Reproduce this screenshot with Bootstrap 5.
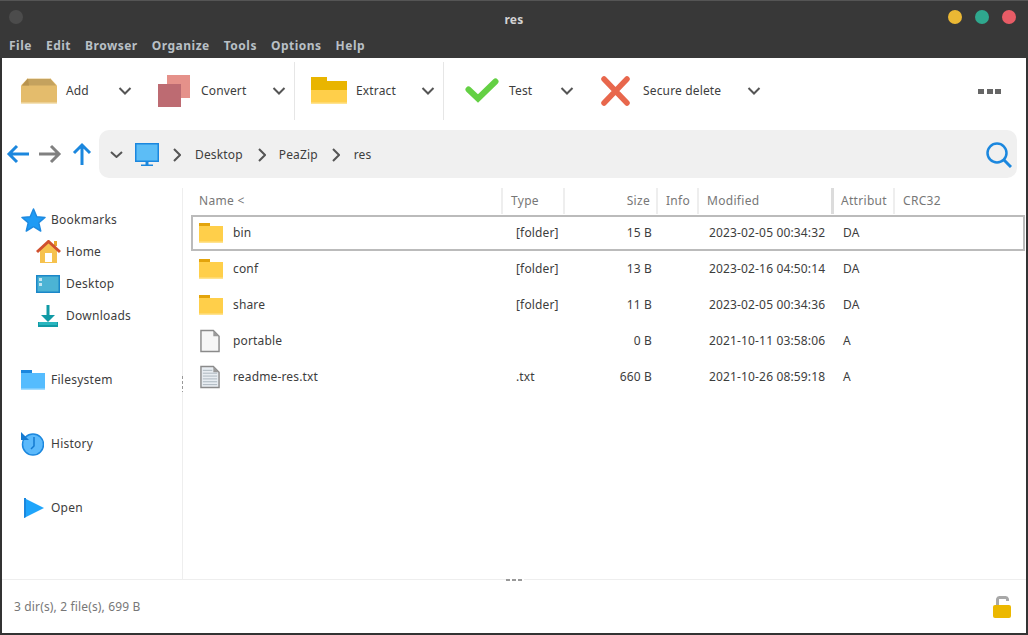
<!doctype html>
<html lang="en">
<head>
<meta charset="utf-8">
<title>res</title>
<link href="https://cdn.jsdelivr.net/npm/bootstrap@5.3.0/dist/css/bootstrap.min.css" rel="stylesheet">
<style>
html,body{height:635px;overflow:hidden;background:#fff}
body{font-family:"Noto Sans","Open Sans",sans-serif;font-size:12px;color:#3d3d3d;line-height:16px;letter-spacing:.15px}
.win{width:1028px;height:635px;border:2px solid #333;border-width:0 2px 2px 2px;background:#fff}
.chrome{height:58px;background:#383838;margin:0 -2px;border-top:1px solid #555;padding:0 9px}
.title-row{height:38px;position:relative}
.ttl{font-weight:700;color:#d3d3d3;letter-spacing:.3px}
.blob{width:14px;height:14px;border-radius:50%;display:block}
.blobs{margin-top:-6px}
.b-ghost{background:#4c4c4c}.b-y{background:#ebb834}.b-g{background:#2fa88e}.b-r{background:#e85c66}
.menu-row{height:13px;gap:14px;color:#b9c0c6;font-weight:700;letter-spacing:.5px}
.tb{height:71px;padding:4px 0 0 19px}
.tb-item{height:58px;flex:none}
.tb-sep{width:1px;height:58px;background:#e6e6e6;flex:none}
.dot-sq{display:block;width:6px;height:5px;background:#666}
.chev{flex:none;display:block}
.nav-row{height:48px;margin-top:1px}
.arrows{width:97px;padding-left:4px;flex:none}
.pathbar{width:918px;height:48px;background:#f0f0f0;border-radius:10px;padding:2px 5px 0 11px}
.main-area{height:402px;padding-top:10px}
.side{width:181px;flex:none;border-right:1px solid #eee;padding:16px 0 0 19px;position:relative;letter-spacing:.25px}
.side-row{height:32px}
.side-sub{padding-left:15px}
.side-ic{width:30px;flex:none;display:flex;justify-content:flex-start}
.spacer-row{height:32px}
.grip{position:absolute;right:-1px;top:188px;width:1px;height:16px;background:repeating-linear-gradient(#999 0 3px,#fff 3px 5px)}
.list{flex:1;min-width:0}
.hdr{height:26px;color:#777;letter-spacing:.3px}
.hc{height:26px;display:flex;align-items:center;border-right:2px solid #eee;flex:none;padding-left:8px}
.c-name{width:320px;padding-left:16px}
.c-type{width:62px}
.c-size{width:93px;justify-content:flex-end;padding-right:6px}
.c-info{width:41px}
.c-mod{width:135px;border-right:3px solid #dcdcdc}
.c-attr{width:61px;padding-left:7px}
.c-crc{border:0}
.frow{height:36px;margin-left:8px;width:834px;border:2px solid transparent}
.frow.sel{border-color:#bbb;margin-top:1px;padding-top:1px}
.f-ic{width:40px;padding-left:6px;flex:none;display:flex}
.f-name{width:283px}
.ftype{width:80px}
.fsize{width:56px;text-align:right}
.fdate{margin-left:57px;width:134px}
.status{height:54px;border-top:1px solid #eee;padding:0 15px 0 12px;position:relative;color:#777}
.vgrip{position:absolute;left:504px;top:-1px;width:18px;height:2px;background:repeating-linear-gradient(90deg,#999 0 4px,#fff 4px 6px)}
svg{display:block;flex:none}
</style>
</head>
<body>
<div class="win d-flex flex-column">
  <div class="chrome">
    <div class="title-row d-flex align-items-center justify-content-between">
      <span class="blob b-ghost blobs"></span>
      <span class="ttl position-absolute top-50 start-50 translate-middle">res</span>
      <div class="d-flex blobs" style="gap:13px;margin-right:3px"><span class="blob b-y"></span><span class="blob b-g"></span><span class="blob b-r"></span></div>
    </div>
    <div class="menu-row d-flex align-items-center">
      <span>File</span><span>Edit</span><span>Browser</span><span>Organize</span><span>Tools</span><span>Options</span><span>Help</span>
    </div>
  </div>

  <div class="tb d-flex align-items-start">
    <div class="tb-item d-flex align-items-center" style="width:132px">
      <svg width="36" height="26" viewBox="0 0 36 26"><path d="M0 7.500 7 0H29L36 7.500V26H0Z" fill="#e4bc6c"/><path d="M7 .5H29L35 7.500H1Z" fill="#c4a25e"/><path d="M7 .5 1 7.500H8Z" fill="#b8934f"/><path d="M7 0H29L29.800 1H6.200Z" fill="#f3e2c0"/><rect y="24.500" width="36" height="1.500" fill="#f4e2b8"/></svg>
      <span style="margin-left:9px;width:52px">Add</span>
      <svg class="chev" width="14" height="8" viewBox="0 0 14 8"><path d="M1.500 1 7 6.500 12.500 1" fill="none" stroke="#555" stroke-width="2"/></svg>
    </div>
    <div class="tb-item d-flex align-items-center" style="width:141px;padding-left:5px">
      <svg width="32" height="32" viewBox="0 0 32 32"><rect x="9" width="23" height="23" fill="#e5918a"/><rect y="9" width="23" height="23" fill="#bd6b72"/></svg>
      <span style="margin-left:11px;width:71px">Convert</span>
      <svg class="chev" width="14" height="8" viewBox="0 0 14 8"><path d="M1.500 1 7 6.500 12.500 1" fill="none" stroke="#555" stroke-width="2"/></svg>
    </div>
    <div class="tb-sep"></div>
    <div class="tb-item d-flex align-items-center" style="width:148px;padding-left:16px">
      <svg width="36" height="27" viewBox="0 0 36 27"><path d="M0 0H16V4H36V13H0Z" fill="#e9b500"/><rect y="13" width="36" height="14" fill="#ffcf4a"/><rect y="25.500" width="36" height="1.500" fill="#ffe38f"/></svg>
      <span style="margin-left:9px;width:65px">Extract</span>
      <svg class="chev" width="14" height="8" viewBox="0 0 14 8"><path d="M1.500 1 7 6.500 12.500 1" fill="none" stroke="#555" stroke-width="2"/></svg>
    </div>
    <div class="tb-sep"></div>
    <div class="tb-item d-flex align-items-center" style="width:136px;padding-left:21px">
      <svg width="34" height="25" viewBox="0 0 34 25"><path d="M3.500 11.500 13 20.500 30.500 3.500" fill="none" stroke="#64d044" stroke-width="6" stroke-linecap="round" stroke-linejoin="miter"/></svg>
      <span style="margin-left:10px;width:51px">Test</span>
      <svg class="chev" width="14" height="8" viewBox="0 0 14 8"><path d="M1.500 1 7 6.500 12.500 1" fill="none" stroke="#555" stroke-width="2"/></svg>
    </div>
    <div class="tb-item d-flex align-items-center" style="width:200px;padding-left:21px">
      <svg width="29" height="30" viewBox="0 0 29 30"><path d="M3 3 26 27M26 3 3 27" fill="none" stroke="#e8674c" stroke-width="5.500" stroke-linecap="round"/></svg>
      <span style="margin-left:13px;width:104px">Secure delete</span>
      <svg class="chev" width="14" height="8" viewBox="0 0 14 8"><path d="M1.500 1 7 6.500 12.500 1" fill="none" stroke="#555" stroke-width="2"/></svg>
    </div>
    <div class="ms-auto d-flex" style="gap:2.500px;margin-right:25px;margin-top:27px"><span class="dot-sq"></span><span class="dot-sq"></span><span class="dot-sq"></span></div>
  </div>

  <div class="nav-row d-flex align-items-center">
    <div class="arrows d-flex align-items-center" style="gap:8px">
      <svg width="24" height="22" viewBox="0 0 24 22"><path d="M23 11H3M11 3 3 11 11 19" fill="none" stroke="#1b87de" stroke-width="3"/></svg>
      <svg width="24" height="22" viewBox="0 0 24 22"><path d="M1 11H21M13 3 21 11 13 19" fill="none" stroke="#808080" stroke-width="3"/></svg>
      <svg width="20" height="24" viewBox="0 0 20 24" style="margin-left:2px"><path d="M10 23V3M2 11 10 3 18 11" fill="none" stroke="#1b87de" stroke-width="3"/></svg>
    </div>
    <div class="pathbar d-flex align-items-center">
      <svg class="chev" width="13" height="7" viewBox="0 0 13 7"><path d="M1 1 6.500 6 12 1" fill="none" stroke="#555" stroke-width="2"/></svg>
      <svg width="24" height="23" viewBox="0 0 24 23" style="margin-left:12px"><rect width="24" height="19" fill="#1b87de"/><rect x="1.500" y="1.500" width="21" height="16" fill="#5cbdf6"/><rect x="10.500" y="19" width="3" height="3" fill="#1b87de"/><rect x="6" y="21.500" width="12" height="1.500" fill="#1b87de"/></svg>
      <svg style="margin:0 14px" width="8" height="14" viewBox="0 0 8 14"><path d="M1 1 7 7 1 13" fill="none" stroke="#555" stroke-width="2"/></svg>
      <span>Desktop</span>
      <svg style="margin:0 14px 0 15px" width="8" height="14" viewBox="0 0 8 14"><path d="M1 1 7 7 1 13" fill="none" stroke="#555" stroke-width="2"/></svg>
      <span style="margin-left:-1px">PeaZip</span>
      <svg style="margin:0 14px 0 14px" width="8" height="14" viewBox="0 0 8 14"><path d="M1 1 7 7 1 13" fill="none" stroke="#555" stroke-width="2"/></svg>
      <span>res</span>
      <svg class="ms-auto" width="26" height="26" viewBox="0 0 26 26"><circle cx="11" cy="11" r="9.500" fill="none" stroke="#1b87de" stroke-width="2.500"/><path d="M18 18 25 25" stroke="#1b87de" stroke-width="3"/></svg>
    </div>
  </div>

  <div class="main-area d-flex">
    <div class="side">
      <div class="side-row d-flex align-items-center"><span class="side-ic"><svg width="25" height="24" viewBox="0 0 25 24"><path d="M12.500 1 15.800 8.700 24 9.400 17.800 14.800 19.700 23 12.500 18.700 5.300 23 7.200 14.800 1 9.400 9.200 8.700Z" fill="#1e9bf5" stroke="#1e8ae0" stroke-width="1.500" stroke-linejoin="round"/></svg></span>Bookmarks</div>
      <div class="side-row side-sub d-flex align-items-center"><span class="side-ic"><svg width="25" height="23" viewBox="0 0 25 23"><path d="M4 10 12.500 2 21 10V23H4Z" fill="#f6c24e"/><rect x="18" y="1" width="3" height="5" fill="#e9a52e"/><path d="M1 12 12.500 1.500 24 12" fill="none" stroke="#d0502e" stroke-width="3"/><rect x="9" y="13" width="7" height="9" fill="#fff"/></svg></span>Home</div>
      <div class="side-row side-sub d-flex align-items-center"><span class="side-ic"><svg width="24" height="18" viewBox="0 0 24 18"><rect width="24" height="18" fill="#1b87c9"/><rect x="1.500" y="1.500" width="21" height="15" fill="#4cb3d4"/><rect x="3" y="3" width="3" height="3" fill="#c5e6f2"/><rect x="3" y="8" width="3" height="3" fill="#c5e6f2"/></svg></span>Desktop</div>
      <div class="side-row side-sub d-flex align-items-center"><span class="side-ic"><svg width="24" height="24" viewBox="0 0 24 24"><path d="M12 1V13" stroke="#119aa5" stroke-width="3"/><path d="M5 11H19L12 18Z" fill="#119aa5"/><rect x="2" y="18" width="20" height="5" fill="#119aa5"/><rect x="3" y="18" width="18" height="3" fill="#29b6bf"/></svg></span>Downloads</div>
      <div class="spacer-row"></div>
      <div class="side-row d-flex align-items-center"><span class="side-ic"><svg width="24" height="20" viewBox="0 0 24 20"><path d="M0 0H11V3H24V20H0Z" fill="#55bcfe"/><rect width="11" height="3" fill="#1b87de"/><rect y="18.500" width="24" height="1.500" fill="#a5dcfe"/></svg></span>Filesystem</div>
      <div class="spacer-row"></div>
      <div class="side-row d-flex align-items-center"><span class="side-ic"><svg width="23" height="24" viewBox="0 0 23 24"><circle cx="12" cy="12.500" r="10.500" fill="#5bb9fb" stroke="#1b87de" stroke-width="1.500"/><path d="M0 0 8 8H0Z" fill="#1479d0"/><path d="M13 5V14L10 17" fill="none" stroke="#1479d0" stroke-width="1.500"/></svg></span>History</div>
      <div class="spacer-row"></div>
      <div class="side-row d-flex align-items-center"><span class="side-ic"><svg width="23" height="20" viewBox="0 0 23 20" style="margin-left:3px"><path d="M0 0 20 10 0 20Z" fill="#1fa5fb"/><path d="M0 0H2V19L0 20Z" fill="#1b87de"/></svg></span>Open</div>
      <div class="grip"></div>
    </div>
    <div class="list">
      <div class="hdr d-flex">
        <div class="hc c-name">Name &lt;</div><div class="hc c-type">Type</div><div class="hc c-size">Size</div><div class="hc c-info">Info</div><div class="hc c-mod">Modified</div><div class="hc c-attr">Attribut</div><div class="hc c-crc">CRC32</div>
      </div>
      <div class="frow sel d-flex align-items-center">
        <span class="f-ic"><svg width="24" height="20" viewBox="0 0 24 20"><path d="M0 0H11V3H24V20H0Z" fill="#ffcf4a"/><rect width="11" height="3" fill="#e3a40c"/><rect y="18.500" width="24" height="1.500" fill="#ffe38f"/></svg></span>
        <span class="f-name">bin</span><span class="ftype">[folder]</span><span class="fsize">15&nbsp;B</span><span class="fdate">2023-02-05 00:34:32</span><span>DA</span>
      </div>
      <div class="frow d-flex align-items-center">
        <span class="f-ic"><svg width="24" height="20" viewBox="0 0 24 20"><path d="M0 0H11V3H24V20H0Z" fill="#ffcf4a"/><rect width="11" height="3" fill="#e3a40c"/><rect y="18.500" width="24" height="1.500" fill="#ffe38f"/></svg></span>
        <span class="f-name">conf</span><span class="ftype">[folder]</span><span class="fsize">13&nbsp;B</span><span class="fdate">2023-02-16 04:50:14</span><span>DA</span>
      </div>
      <div class="frow d-flex align-items-center">
        <span class="f-ic"><svg width="24" height="20" viewBox="0 0 24 20"><path d="M0 0H11V3H24V20H0Z" fill="#ffcf4a"/><rect width="11" height="3" fill="#e3a40c"/><rect y="18.500" width="24" height="1.500" fill="#ffe38f"/></svg></span>
        <span class="f-name">share</span><span class="ftype">[folder]</span><span class="fsize">11&nbsp;B</span><span class="fdate">2023-02-05 00:34:36</span><span>DA</span>
      </div>
      <div class="frow d-flex align-items-center">
        <span class="f-ic"><svg width="20" height="24" viewBox="0 0 21 24" style="margin-left:1px"><path d="M1 1H14L20 7V23H1Z" fill="#f6f6f6" stroke="#8a8a8a" stroke-width="1.500"/><path d="M14 1V7H20Z" fill="#9a9a9a"/></svg></span>
        <span class="f-name">portable</span><span class="ftype"></span><span class="fsize">0&nbsp;B</span><span class="fdate">2021-10-11 03:58:06</span><span>A</span>
      </div>
      <div class="frow d-flex align-items-center">
        <span class="f-ic"><svg width="20" height="24" viewBox="0 0 21 24" style="margin-left:1px"><path d="M1 1H14L20 7V23H1Z" fill="#e8edf2" stroke="#8a8a8a" stroke-width="1.500"/><path d="M14 1V7H20Z" fill="#9a9a9a"/><path d="M3 5H13M3 8H18M3 11H18M3 14H18M3 17H18M3 20H18" stroke="#aab4bd" stroke-width="1"/></svg></span>
        <span class="f-name">readme-res.txt</span><span class="ftype">.txt</span><span class="fsize">660&nbsp;B</span><span class="fdate">2021-10-26 08:59:18</span><span>A</span>
      </div>
    </div>
  </div>

  <div class="status d-flex align-items-center justify-content-between">
    <div class="vgrip"></div>
    <span>3 dir(s), 2 file(s), 699 B</span>
    <svg width="18" height="22" viewBox="0 0 18 22"><path d="M4.500 10V3A2 2 0 0 1 6.500 1.500H12.500A2 2 0 0 1 14.500 3V5" fill="none" stroke="#a8a8a8" stroke-width="3"/><rect y="9" width="18" height="13" rx="2" fill="#ecb800"/></svg>
  </div>
</div>
</body>
</html>
